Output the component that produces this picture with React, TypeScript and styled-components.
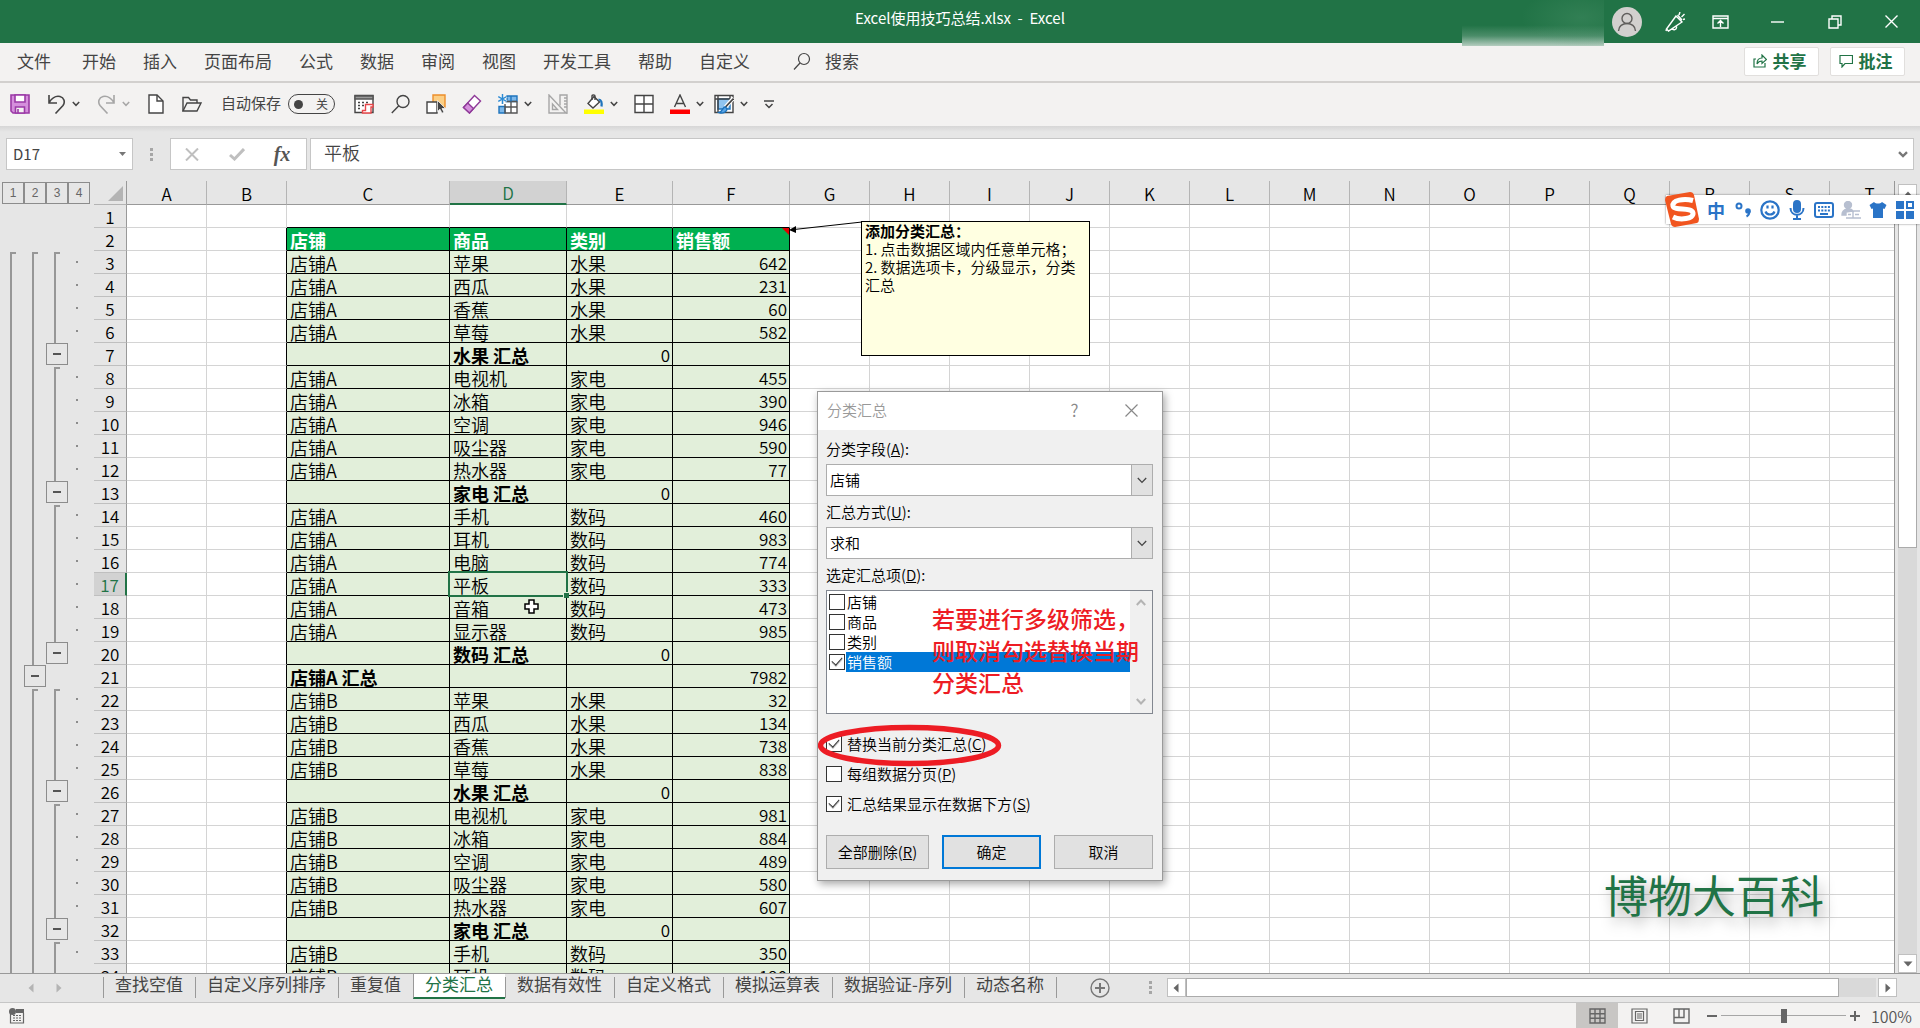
import React, { ReactNode } from "react";
import styled, { createGlobalStyle, css } from "styled-components";

const UI_FONT = `"Noto Sans CJK SC", "Noto Sans", sans-serif`;

const GlobalStyle = createGlobalStyle`
  *, *::before, *::after { box-sizing: border-box; }
  html, body { margin: 0; height: 100%; overflow: hidden; }
  body { font-family: ${UI_FONT}; font-weight: 350; color: #444; background: #e6e6e6; }
  button, input, select { font: inherit; color: inherit; margin: 0; }
  button { padding: 0; border: 0; background: none; }
  svg { display: block; }
`;

const Shell = styled.div`
  display: flex;
  flex-direction: column;
  height: 100vh;
  overflow: hidden;
`;

/* ---------- title bar ---------- */
const TitleBar = styled.header`
  position: relative;
  display: grid;
  grid-template-columns: 1fr auto 1fr;
  align-items: center;
  flex: 0 0 43px;
  background: #217346;
  color: #fff;
`;
const Title = styled.h1`
  grid-column: 2;
  margin: 0;
  font-size: 15px;
  font-weight: 400;
  line-height: 20px;
  padding-bottom: 7px;
  white-space: pre;
`;
const WindowTools = styled.div`
  display: flex;
  justify-content: flex-end;
  align-items: center;
`;
const WindowButton = styled.button<{ $w?: number }>`
  display: grid;
  place-items: center;
  width: ${(p) => p.$w ?? 57}px;
  height: 43px;
  color: #fff;
`;
const Avatar = styled.button`
  display: grid;
  place-items: center;
  width: 30px;
  height: 30px;
  margin-right: 16px;
  border-radius: 50%;
  background: #d2d0ce;
  color: #605e5c;
`;
const BlurredName = styled.div`
  position: absolute;
  z-index: 2;
  top: 0;
  right: 316px;
  width: 142px;
  height: 46px;
  background:
    radial-gradient(ellipse 60px 30px at 84% 38%, rgba(80, 150, 110, 0.35), transparent),
    linear-gradient(#217346 55%, #4b8d69 78%, #b4cdbf 100%);
`;

/* ---------- ribbon ---------- */
const MenuBar = styled.nav`
  display: flex;
  align-items: center;
  flex: 0 0 40px;
  padding: 0 15px 2px 17px;
  border-bottom: 2px solid #d2d0ce;
  background: #f3f2f1;
`;
const MenuList = styled.div`
  display: flex;
  gap: 27px;
`;
const MenuItem = styled.button`
  font-size: 17px;
  font-weight: 400;
  line-height: 24px;
  white-space: nowrap;
  &:first-child { margin-right: 4px; }
`;
const MenuSearch = styled.button`
  display: flex;
  align-items: center;
  gap: 14px;
  margin-left: 43px;
  font-size: 17px;
  font-weight: 400;
  line-height: 24px;
`;
const RibbonActions = styled.div`
  display: flex;
  gap: 11px;
  margin-left: auto;
`;
const ActionButton = styled.button`
  display: flex;
  align-items: center;
  justify-content: center;
  gap: 6px;
  width: 75px;
  height: 29px;
  padding: 0 4px 0 0;
  border: 1px solid #e1dfdd;
  border-radius: 2px;
  background: #fff;
  color: #217346;
  font-size: 17px;
  font-weight: 700;
  line-height: 24px;
`;

/* ---------- quick access ---------- */
const QuickBar = styled.div`
  display: flex;
  align-items: center;
  gap: 16px;
  flex: 0 0 43px;
  padding: 0 10px 1px;
  background: #f3f2f1;
`;
const ToolPair = styled.div`
  display: flex;
  gap: 10px;
`;
const ToolButton = styled.button<{ $dim?: boolean }>`
  display: flex;
  align-items: center;
  gap: 6px;
  color: ${(p) => (p.$dim ? "#a6a6a6" : "#444")};
`;
const AutoSave = styled.label`
  display: flex;
  align-items: center;
  gap: 7px;
  padding: 0 3px;
  font-size: 15px;
  font-weight: 400;
  line-height: 20px;
  & > span:first-child { padding-bottom: 3px; }
`;
const Toggle = styled.span`
  display: flex;
  align-items: center;
  justify-content: space-between;
  width: 47px;
  height: 20px;
  padding: 0 6px 0 5px;
  border: 1px solid #444;
  border-radius: 10px;
  font-size: 12px;
  line-height: 18px;
`;
const ToggleInput = styled.input`
  appearance: none;
  width: 9px;
  height: 9px;
  border-radius: 50%;
  background: #444;
`;

/* ---------- formula bar ---------- */
const FormulaBar = styled.div`
  display: flex;
  align-items: center;
  flex: 0 0 55px;
  padding: 12px 6px 11px;
  background: linear-gradient(#d6d6d6, #e6e6e6 6px);
`;
const Field = styled.div<{ $width?: number }>`
  display: flex;
  align-items: center;
  flex: ${(p) => (p.$width ? `0 0 ${p.$width}px` : "1")};
  min-width: 0;
  height: 32px;
  border: 1px solid #c6c6c6;
  background: #fff;
`;
const NameInput = styled.input`
  flex: 1;
  width: 0;
  min-width: 0;
  padding: 0 6px 1px;
  border: 0;
  outline: 0;
  background: none;
  font-size: 15px;
  font-weight: 400;
`;
const FormulaInput = styled(NameInput)`
  padding: 0 13px 4px;
  font-size: 18px;
  font-weight: 350;
  line-height: 24px;
`;
const FieldButton = styled.button`
  display: grid;
  place-items: center;
  flex: 0 0 20px;
  height: 30px;
`;
const FormulaActions = styled(Field)`
  justify-content: space-between;
  padding: 0 14px 0 11px;
  margin-right: 3px;
`;
const Fx = styled.span`
  font: italic 700 20px/24px "Liberation Serif", serif;
  color: #555;
`;
const Dots = styled.span<{ $margin: string }>`
  display: flex;
  flex-direction: column;
  gap: 2px;
  margin: ${(p) => p.$margin};
  &::before, &::after, & > i { content: ""; width: 3px; height: 3px; background: #a6a6a6; }
`;

/* ---------- sheet ---------- */
const Workspace = styled.main`
  position: relative;
  display: flex;
  flex: 1;
  min-height: 0;
  overflow: hidden;
  background: #e6e6e6;
`;
const Gutter = styled.aside`
  flex: 0 0 94px;
  padding: 1px 0 0 2px;
`;
const Levels = styled.div`
  display: flex;
  height: 23px;
`;
const LevelButton = styled.button`
  width: 22px;
  height: 22px;
  border: 1px solid #8c8c8c;
  font: 12px/20px "Liberation Sans", sans-serif;
  color: #666;
`;
const OutlineColumns = styled.div`
  display: flex;
  padding-top: 46px;
`;
const OutlineColumn = styled.div`
  display: flex;
  flex-direction: column;
  flex: 0 0 22px;
`;
const Bracket = styled.div<{ $rows: number }>`
  flex: 0 0 auto;
  height: ${(p) => p.$rows * 23}px;
  padding: 1px 0 0 8px;
  &::before {
    content: "";
    display: block;
    width: 6px;
    height: 100%;
    border: solid #979797;
    border-width: 2px 0 0 2px;
  }
`;
const CollapseButton = styled.button`
  display: grid;
  place-items: center;
  flex: 0 0 22px;
  margin-bottom: 1px;
  border: 1px solid #8c8c8c;
  &::before { content: ""; width: 8px; height: 2px; background: #555; }
`;
const Spacer = styled.div`
  flex: 0 0 23px;
`;
const DetailDot = styled.div<{ $on: boolean }>`
  flex: 0 0 23px;
  padding: 10px 0 0 8px;
  &::before { content: ""; display: block; width: 2px; height: 2px; background: ${(p) => (p.$on ? "#8c8c8c" : "transparent")}; }
`;
const GridArea = styled.div`
  flex: 1;
  min-width: 0;
  overflow: hidden;
  border-right: 1px solid #979797;
`;
const Grid = styled.table`
  width: 1815px;
  table-layout: fixed;
  border-collapse: separate;
  border-spacing: 0;
  color: #000;
`;
const ColHead = styled.th<{ $active?: boolean }>`
  height: 24px;
  padding: 2px 0 0;
  border-bottom: 1px solid #999;
  border-right: 1px solid #b4b4b4;
  background: #e6e6e6;
  font-size: 17px;
  font-weight: 350;
  line-height: 20px;
  ${(p) => p.$active && css`
    border-bottom: 2px solid #217346;
    background: #d2d2d2;
    color: #217346;
  `}
`;
const Corner = styled.td`
  height: 24px;
  padding: 0 3px 3px 0;
  border-right: 1px solid #999;
  border-bottom: 1px solid #b4b4b4;
  vertical-align: bottom;
  & svg { margin-left: auto; }
`;
const RowHead = styled.th<{ $active?: boolean }>`
  height: 23px;
  padding: 2px 0 0;
  border-right: 1px solid #999;
  border-bottom: 1px solid #bfbfbf;
  background: #e6e6e6;
  font-size: 17px;
  font-weight: 350;
  line-height: 20px;
  ${(p) => p.$active && css`
    border-right: 2px solid #217346;
    background: #d2d2d2;
    color: #217346;
  `}
`;
const Cell = styled.td<{ $kind?: "head" | "data"; $bold?: boolean; $num?: boolean; $edgeR?: boolean; $edgeB?: boolean }>`
  position: relative;
  height: 23px;
  padding: 2px 2px 0 3px;
  border: solid #d4d4d4;
  border-width: 0 1px 1px 0;
  background: #fff;
  font-size: ${(p) => (p.$num ? 17 : 18)}px;
  font-weight: ${(p) => (p.$bold ? 700 : 350)};
  line-height: 20px;
  text-align: ${(p) => (p.$num ? "right" : "left")};
  white-space: nowrap;
  ${(p) => p.$kind && css`
    border-color: #000;
    background: ${p.$kind === "head" ? "#00b050" : "#e2efda"};
  `}
  ${(p) => p.$kind === "head" && css`color: #fff;`}
  ${(p) => p.$edgeR && css`border-right-color: #000;`}
  ${(p) => p.$edgeB && css`border-bottom-color: #000;`}
`;
const CommentFlag = styled.span`
  position: absolute;
  top: 0;
  right: 0;
  width: 7px;
  height: 7px;
  background: #e00000;
  clip-path: polygon(0 0, 100% 0, 100% 100%);
`;
const Selection = styled.span`
  position: absolute;
  z-index: 1;
  inset: -2px;
  border: 2px solid #217346;
  &::after {
    content: "";
    position: absolute;
    right: -3px;
    bottom: -3px;
    width: 6px;
    height: 6px;
    border: solid #e2efda;
    border-width: 1px 0 0 1px;
    background: #217346;
  }
`;

/* ---------- scroll bars ---------- */
const VScroll = styled.div`
  display: flex;
  flex-direction: column;
  flex: 0 0 25px;
  padding: 3px 3px 0 3px;
`;
const VTrack = styled.div`
  flex: 1;
  background: #d9d9d9;
`;
const ScrollThumb = styled.div`
  border: 1px solid #ababab;
  background: #fff;
`;
const VThumb = styled(ScrollThumb)`
  height: 46%;
`;
const ScrollButton = styled.button`
  display: grid;
  place-items: center;
  flex: 0 0 19px;
  min-height: 19px;
  border: 1px solid #c0c0c0;
  background: #fff;
  color: #666;
`;

/* ---------- floating things over the sheet ---------- */
const NoteArrow = styled.svg`
  position: absolute;
  left: 788px;
  top: 38px;
`;
const Note = styled.div`
  position: absolute;
  left: 861px;
  top: 40px;
  width: 229px;
  height: 135px;
  padding: 0 3px;
  border: 1px solid #000;
  background: #ffffe1;
  color: #000;
  font-size: 15px;
  line-height: 18px;
  white-space: pre-line;
`;
const CellCursor = styled.svg`
  position: absolute;
  left: 523px;
  top: 417px;
`;
const Watermark = styled.div`
  position: absolute;
  right: 96px;
  bottom: 47px;
  color: #217346;
  font-size: 44px;
  font-weight: 400;
  line-height: 64px;
  text-shadow: 4px 8px 14px rgba(0, 0, 0, 0.35);
`;
const ImeBar = styled.div`
  position: absolute;
  z-index: 3;
  right: 0;
  top: 14px;
  display: flex;
  align-items: center;
  gap: 9px;
  width: 254px;
  height: 29px;
  padding-left: 41px;
  background: #fff;
  box-shadow: 0 0 2px rgba(0, 0, 0, 0.5);
  color: #2a74c7;
`;
const ImeLogo = styled.svg`
  position: absolute;
  left: -3px;
  top: -4px;
`;
const ImeButton = styled.button`
  display: flex;
  align-items: center;
  justify-content: center;
  flex: 0 0 18px;
  min-width: 0;
  height: 24px;
  color: inherit;
  font-size: 18px;
  font-weight: 700;
  line-height: 24px;
  & > svg { flex: none; }
`;

/* ---------- dialog ---------- */
const Dialog = styled.section`
  position: absolute;
  z-index: 2;
  left: 817px;
  top: 210px;
  width: 346px;
  border: 1px solid #9a9a9a;
  background: #f0f0f0;
  box-shadow: 2px 3px 8px rgba(0, 0, 0, 0.35);
  color: #000;
  font-size: 15px;
  line-height: 20px;
`;
const DialogTitle = styled.header`
  display: flex;
  align-items: center;
  height: 38px;
  padding: 0 24px 2px 9px;
  background: #fff;
  color: #999;
`;
const DialogHeading = styled.h2`
  flex: 1;
  margin: 0;
  font-size: 15px;
  font-weight: 350;
`;
const DialogTool = styled.button`
  display: grid;
  place-items: center;
  width: 13px;
  height: 24px;
  margin-left: 44px;
  color: #888;
  font-size: 17px;
`;
const DialogBody = styled.div`
  padding: 9px 9px 11px 8px;
`;
const FieldLabel = styled.label`
  display: block;
  height: 25px;
`;
const SelectBox = styled.div`
  position: relative;
  height: 32px;
  margin-bottom: 6px;
`;
const Select = styled.select`
  appearance: none;
  width: 100%;
  height: 32px;
  padding: 0 26px 0 3px;
  border: 1px solid #adadad;
  border-radius: 0;
  background: #fff;
`;
const SelectArrow = styled.span`
  position: absolute;
  top: 0;
  right: 0;
  display: grid;
  place-items: center;
  width: 22px;
  height: 32px;
  border: 1px solid #adadad;
  background: #e1e1e1;
  color: #444;
  pointer-events: none;
`;
const ListBox = styled.div`
  display: flex;
  height: 124px;
  border: 1px solid #828790;
  background: #fff;
`;
const ListItems = styled.div`
  flex: 1;
  padding: 1px 0 0 2px;
`;
const ListItem = styled.label<{ $selected?: boolean }>`
  display: flex;
  align-items: center;
  gap: 1px;
  height: 20px;
  & > span {
    flex: 1;
    padding-left: 1px;
    ${(p) => p.$selected && css`background: #0078d7; color: #fff;`}
  }
`;
const ListScroll = styled.div`
  display: flex;
  flex-direction: column;
  justify-content: space-between;
  align-items: center;
  width: 22px;
  padding: 8px 0;
  background: #f0f0f0;
  color: #b4b4b4;
`;
const Checkbox = styled.input`
  appearance: none;
  flex: 0 0 16px;
  width: 16px;
  height: 16px;
  border: 1px solid #333;
  background: #fff;
  &:checked::after {
    content: "";
    display: block;
    width: 10px;
    height: 6px;
    margin: 2px 0 0 2px;
    border: solid #333;
    border-width: 0 0 1px 1px;
    box-shadow: -1px 1px 0 rgba(51, 51, 51, 0.25);
    transform: rotate(-48deg);
  }
`;
const Options = styled.div`
  display: flex;
  flex-direction: column;
  gap: 10px;
  padding: 20px 0 21px;
`;
const Option = styled.label`
  display: flex;
  align-items: center;
  gap: 5px;
`;
const DialogButtons = styled.div`
  display: grid;
  grid-template-columns: 103px 99px 99px;
  justify-content: space-between;
`;
const DialogButton = styled.button<{ $primary?: boolean }>`
  height: 34px;
  border: ${(p) => (p.$primary ? "2px solid #0078d7" : "1px solid #adadad")};
  background: #e1e1e1;
`;
const Callout = styled.p`
  position: absolute;
  left: 114px;
  top: 210px;
  margin: 0;
  color: #ed1c24;
  font-size: 23px;
  font-weight: 500;
  line-height: 32px;
  white-space: pre;
`;
const Ring = styled.svg`
  position: absolute;
  left: 0;
  top: 332px;
`;

/* ---------- tabs + status ---------- */
const TabBar = styled.div`
  display: flex;
  align-items: flex-start;
  flex: 0 0 30px;
  border-top: 1px solid #999;
  border-bottom: 1px solid #c6c6c6;
  background: #e6e6e6;
`;
const TabNav = styled.div`
  display: flex;
  align-items: center;
  gap: 18px;
  flex: 0 0 103px;
  height: 28px;
  padding-left: 26px;
  color: #b4b4b4;
`;
const Tab = styled.button<{ $active?: boolean }>`
  flex: 0 0 auto;
  height: 21px;
  margin-top: 3px;
  padding: 0 12px 8px 11px;
  border-left: 1px solid #999;
  font-size: 17px;
  font-weight: 400;
  line-height: 13px;
  white-space: nowrap;
  &:last-of-type { border-right: 1px solid #999; }
  ${(p) => p.$active && css`
    height: 25px;
    margin-top: 0;
    padding-bottom: 4px;
    border-bottom: 2px solid #217346;
    background: #fff;
    color: #217346;
  `}
`;
const Tabs = styled.div`
  display: flex;
`;
const AddSheet = styled.button`
  margin: 4px 0 0 33px;
  color: #777;
`;
const HScroll = styled.div`
  display: flex;
  flex: 1;
  height: 19px;
  margin: 4px 23px 0 0;
`;
const HTrack = styled.div`
  display: flex;
  flex: 1;
  margin-right: 2px;
  padding-right: 37px;
  background: #d9d9d9;
`;
const HThumb = styled(ScrollThumb)`
  flex: 1;
`;
const StatusBar = styled.footer`
  display: flex;
  align-items: center;
  flex: 0 0 25px;
  padding: 0 8px 0 9px;
  background: #f3f2f1;
  color: #666;
`;
const ViewButtons = styled.div`
  display: flex;
  margin-left: auto;
`;
const ViewButton = styled.button<{ $on?: boolean }>`
  display: grid;
  place-items: center;
  width: 42px;
  height: 25px;
  background: ${(p) => (p.$on ? "#c8c6c4" : "transparent")};
`;
const ZoomControl = styled.div`
  display: flex;
  align-items: center;
  gap: 4px;
  margin-left: 5px;
`;
const ZoomSlider = styled.input`
  appearance: none;
  width: 125px;
  height: 15px;
  background: linear-gradient(#a6a6a6, #a6a6a6) center / 100% 1px no-repeat;
  &::-webkit-slider-thumb {
    appearance: none;
    width: 6px;
    height: 14px;
    background: #666;
  }
`;
const ZoomValue = styled.span`
  margin-left: 7px;
  font-size: 16px;
  line-height: 20px;
  color: #555;
`;

/* ---------- icons ---------- */
const Icon = ({ children, w = 20, h = 20, sw = 1.4 }: { children: ReactNode; w?: number; h?: number; sw?: number }) => (
  <svg width={w} height={h} viewBox={`0 0 ${w} ${h}`} fill="none" stroke="currentColor" strokeWidth={sw} aria-hidden="true">
    {children}
  </svg>
);
const Caret = () => (
  <Icon w={8} h={6} sw={1.5}><path d="M.8 1 4 4.3 7.2 1" /></Icon>
);
const Chevron = () => (
  <Icon w={10} h={7} sw={1.3}><path d="M.8 1 5 5.4 9.2 1" /></Icon>
);
const Tri = ({ d }: { d: "up" | "down" | "left" | "right" }) => {
  const paths = { up: "M5 2.5 9.5 7.5H.5z", down: "M.5 2.5h9L5 7.5z", left: "M7.5.5v9L2.5 5z", right: "M2.5.5v9L7.5 5z" };
  return <svg width="10" height="10" aria-hidden="true"><path d={paths[d]} fill="currentColor" /></svg>;
};
const SearchIcon = () => (
  <Icon><circle cx="13" cy="7.5" r="6" /><path d="M8.800 11.800 1.800 19" /></Icon>
);
const SaveIcon = () => (
  <Icon sw={1.6}>
    <path d="M1 1h18v18H3l-2-2z" fill="#d58fdc" stroke="#9b3aa6" />
    <path d="M5 1h10v7H5z" fill="#fff" stroke="#9b3aa6" />
    <path d="M5.5 19v-6h9v6z" fill="#f3f2f1" stroke="#9b3aa6" />
    <path d="M8 15v4" stroke="#9b3aa6" />
  </Icon>
);
const UndoIcon = () => <Icon sw={1.6}><path d="M3 1v8h8M3 8.5C6 4 10 1.5 14 2.5c4 1 5.5 5.5 3 9L9.5 19.5" /></Icon>;
const RedoIcon = () => <Icon sw={1.6}><path d="M18 1v8h-8M18 8.5C15 4 11 1.5 7 2.5c-4 1-5.5 5.5-3 9L11.5 19.5" /></Icon>;
const NewIcon = () => <Icon><path d="M3 1h8l6 6v12H3z" fill="#fff" /><path d="M11 1v6h6" /></Icon>;
const OpenIcon = () => <Icon><path d="M1 17V3.5h5.5l2 2.5H15v3" /><path d="M1 17 5 9h14l-4 8z" /></Icon>;
const CalendarIcon = () => (
  <Icon>
    <path d="M1 1.500h18v17H1z" fill="#fff" /><path d="M1 2h18v3H1z" fill="#999" stroke="#555" />
    <path d="M4 8.500h2m2 0h2m2 0h2M4 11.500h2m2 0h2M4 14.500h2" />
    <path d="M8.500 19v-2.500h3v-6H19V13h-2v6z" fill="#fff" stroke="#e8474a" strokeWidth="1.400" />
  </Icon>
);
const SelectIcon = () => (
  <Icon>
    <path d="M7 1h12v12H7z" fill="#fbcf85" stroke="#ed8f2b" /><path d="M1 8h10v11H1z" fill="#fff" />
    <path d="M11.500 6.500v11l2.500-2.300 2 4 2-1-2-3.700h3.500z" fill="#444" stroke="#fff" strokeWidth=".7" />
  </Icon>
);
const EraserIcon = () => (
  <Icon><path d="M12.500 1.500 18.500 7 7.500 19 1.500 13.500z" fill="#fff" stroke="#8f3a99" /><path d="M5.800 9 11.500 14.500 7.500 19l-6-5.500z" fill="#d58fdc" stroke="#8f3a99" /></Icon>
);
const TableIcon = () => (
  <Icon>
    <path d="M1 2h18v17H1z" fill="#fff" stroke="none" />
    <path d="M9 2h10v5.500H9zM1 12.500h6V19H1z" fill="#7db8ea" stroke="#1e74bd" />
    <path d="M7 13h12M7 7.500h12M13 7.500v11.500M7 10v9h12V7.500" stroke="#555" />
    <path d="M13 2v5.500" stroke="#1e74bd" />
    <path d="M4.500 0v10M.3 2.500l8.400 5M8.700 2.500.3 7.500" stroke="#f3f2f1" strokeWidth="3" />
    <path d="M4.500 0v10M.3 2.500l8.400 5M8.700 2.500.3 7.500" stroke="#2a8ad4" />
  </Icon>
);
const RulerIcon = () => (
  <Icon><path d="M1 1v18h17zM4.500 10v5.500h5z" /><path d="M12 11.500V1h7v18h-1M16 4h3M16 7h3M16 10h3M16 13h3" /></Icon>
);
const FillIcon = () => (
  <Icon>
    <path d="M10 2.500 15.500 8 9 14 4 9.500z" fill="#fff" /><path d="M8 6V2c0-1.500 3-1.500 3 0v4" /><path d="M14.500 5.500c3 0 3.500 3 3 7" stroke="#1e74bd" strokeWidth="2.200" />
    <path d="M0 15.500h20v4.500H0z" fill="#ff0" stroke="none" />
  </Icon>
);
const BordersIcon = () => <Icon><path d="M1 1.500h18v17H1z" fill="#fff" /><path d="M10 1.500v17M1 10h18" /></Icon>;
const FontColorIcon = () => (
  <Icon><path d="M4.500 13 10 1l5.500 12M6.500 9.500h7" /><path d="M0 15.500h20v4.500H0z" fill="red" stroke="none" /></Icon>
);
const FormatIcon = () => (
  <Icon>
    <path d="M1 1.500h18v17H1z" fill="#fff" /><path d="M4 5h12v10H4z" fill="#8fc4f0" stroke="#1e74bd" />
    <path d="M1 5h18M4 1.500v17M16 1.500v4" /><path d="m19.500 4-8 9" stroke="#fff" strokeWidth="4" /><path d="m19.500 4.500-8 8.500" stroke="#444" strokeWidth="1.800" />
    <path d="M11.500 13c-3-.5-2 4-6.500 5.500 4 1.500 8-.5 8-3.500z" fill="#5aa5e6" stroke="#1e74bd" />
  </Icon>
);

/* ---------- data ---------- */
type Row = [string, string, string, string];
const goods: [string, string][] = [
  ["苹果", "水果"], ["西瓜", "水果"], ["香蕉", "水果"], ["草莓", "水果"], ["水果 汇总", ""],
  ["电视机", "家电"], ["冰箱", "家电"], ["空调", "家电"], ["吸尘器", "家电"], ["热水器", "家电"], ["家电 汇总", ""],
  ["手机", "数码"], ["耳机", "数码"], ["电脑", "数码"], ["平板", "数码"], ["音箱", "数码"], ["显示器", "数码"], ["数码 汇总", ""],
];
const salesA = [642, 231, 60, 582, 0, 455, 390, 946, 590, 77, 0, 460, 983, 774, 333, 473, 985, 0];
const salesB = [32, 134, 738, 838, 0, 981, 884, 489, 580, 607, 0, 350, 190];
const shopRows = (shop: string, sales: number[]): Row[] =>
  sales.map((n, i) => (goods[i][1] ? [shop, goods[i][0], goods[i][1], String(n)] : ["", goods[i][0], "0", ""]));
const rows: Row[] = [
  ["店铺", "商品", "类别", "销售额"],
  ...shopRows("店铺A", salesA),
  ["店铺A 汇总", "", "", "7982"],
  ...shopRows("店铺B", salesB),
];
const widths = [80, 80, 163, 117, 106, 117, ...Array(14).fill(80)];
const letters = "ABCDEFGHIJKLMNOPQRST".split("");
const menus = ["文件", "开始", "插入", "页面布局", "公式", "数据", "审阅", "视图", "开发工具", "帮助", "自定义"];
const tabs = ["查找空值", "自定义序列排序", "重复值", "分类汇总", "数据有效性", "自定义格式", "模拟运算表", "数据验证-序列", "动态名称"];
const level3 = [4, 5, 6, 0, 4, 5];

const SheetRow = ({ index }: { index: number }) => {
  const data = rows[index - 2];
  return (
    <tr>
      <RowHead scope="row" $active={index === 17}>{index}</RowHead>
      {letters.map((letter, c) => {
        const value = data && c >= 2 && c <= 5 ? data[c - 2] : undefined;
        if (value === undefined)
          return <Cell key={letter} $edgeR={!!data && c === 1} $edgeB={index === 1 && c >= 2 && c <= 5} />;
        const head = index === 2;
        return (
          <Cell key={letter} $kind={head ? "head" : "data"} $bold={head || value.includes("汇总")} $num={/^\d+$/.test(value)}>
            {value}
            {head && c === 5 && <CommentFlag />}
            {index === 17 && c === 3 && <Selection />}
          </Cell>
        );
      })}
    </tr>
  );
};

const Outline = () => (
  <Gutter aria-label="分级显示">
    <Levels>{[1, 2, 3, 4].map((n) => <LevelButton key={n}>{n}</LevelButton>)}</Levels>
    <OutlineColumns>
      <OutlineColumn><Bracket $rows={40} /></OutlineColumn>
      <OutlineColumn><Bracket $rows={18} /><CollapseButton aria-label="折叠" /><Bracket $rows={20} /></OutlineColumn>
      <OutlineColumn>
        {level3.map((n, i) => n === 0 ? <Spacer key={i} /> : (
          <React.Fragment key={i}><Bracket $rows={n} /><CollapseButton aria-label="折叠" /></React.Fragment>
        ))}
        <Bracket $rows={8} />
      </OutlineColumn>
      <OutlineColumn>{rows.slice(1, 32).map((r, i) => <DetailDot key={i} $on={r[0] !== "" && r[1] !== ""} />)}</OutlineColumn>
    </OutlineColumns>
  </Gutter>
);

const SubtotalDialog = () => (
  <Dialog role="dialog" aria-labelledby="dlg">
    <DialogTitle>
      <DialogHeading id="dlg">分类汇总</DialogHeading>
      <DialogTool>?</DialogTool>
      <DialogTool aria-label="关闭"><Icon w={13} h={13} sw={1.2}><path d="m.5.5 12 12m0-12-12 12" /></Icon></DialogTool>
    </DialogTitle>
    <DialogBody>
      <FieldLabel htmlFor="field">分类字段(<u>A</u>):</FieldLabel>
      <SelectBox><Select id="field"><option>店铺</option></Select><SelectArrow><Chevron /></SelectArrow></SelectBox>
      <FieldLabel htmlFor="method">汇总方式(<u>U</u>):</FieldLabel>
      <SelectBox><Select id="method"><option>求和</option></Select><SelectArrow><Chevron /></SelectArrow></SelectBox>
      <FieldLabel as="div" id="items">选定汇总项(<u>D</u>):</FieldLabel>
      <ListBox role="group" aria-labelledby="items">
        <ListItems>
          {["店铺", "商品", "类别", "销售额"].map((name, i) => (
            <ListItem key={name} $selected={i === 3}><Checkbox type="checkbox" defaultChecked={i === 3} /><span>{name}</span></ListItem>
          ))}
        </ListItems>
        <ListScroll>
          <Icon w={10} h={7} sw={2}><path d="M.8 6 5 1.5 9.2 6" /></Icon>
          <Icon w={10} h={7} sw={2}><path d="M.8 1 5 5.5 9.2 1" /></Icon>
        </ListScroll>
      </ListBox>
      <Options>
        <Option><Checkbox type="checkbox" defaultChecked /><span>替换当前分类汇总(<u>C</u>)</span></Option>
        <Option><Checkbox type="checkbox" /><span>每组数据分页(<u>P</u>)</span></Option>
        <Option><Checkbox type="checkbox" defaultChecked /><span>汇总结果显示在数据下方(<u>S</u>)</span></Option>
      </Options>
      <DialogButtons>
        <DialogButton>全部删除(<u>R</u>)</DialogButton>
        <DialogButton $primary>确定</DialogButton>
        <DialogButton>取消</DialogButton>
      </DialogButtons>
    </DialogBody>
    <Callout>{"若要进行多级筛选，\n则取消勾选替换当期\n分类汇总"}</Callout>
    <Ring width="186" height="44" aria-hidden="true"><ellipse cx="91.500" cy="21.500" rx="89" ry="18" fill="none" stroke="#ed1c24" strokeWidth="5.500" /></Ring>
  </Dialog>
);

const Ime = () => (
  <ImeBar>
    <ImeLogo width="38" height="38" viewBox="0 0 38 38" aria-hidden="true">
      <path d="M4 5 27 1q3 0 4 3l5 24q0 3-2 4L12 36q-3 0-4-3L2 9q0-3 2-4z" fill="#f1551f" />
      <path d="M30 9.500C21 7 9 9 10 15c1 5 19 1 20 7 1 6-13 7.500-20 4" fill="none" stroke="#fff" strokeWidth="5" />
    </ImeLogo>
    <ImeButton>中</ImeButton>
    <ImeButton aria-label="标点"><Icon w={18} h={18} sw={2}><circle cx="5" cy="5" r="2.500" /><circle cx="14" cy="10" r="2.800" fill="currentColor" stroke="none" /><path d="M15.500 10c0 3-1 4.500-3 5.500" /></Icon></ImeButton>
    <ImeButton aria-label="表情"><Icon w={20} h={20} sw={2.2}><circle cx="10" cy="10" r="8.700" /><path d="M5.500 11.500c1.500 4 7.500 4 9 0M7.500 5.500v3M12.500 5.500v3" /></Icon></ImeButton>
    <ImeButton aria-label="语音"><Icon w={16} h={20} sw={2}><rect x="5" y="1" width="6" height="11" rx="3" fill="currentColor" /><path d="M1.500 8c0 9 13 9 13 0M8 15v4M4 19h8" /></Icon></ImeButton>
    <ImeButton aria-label="键盘"><Icon w={20} h={16} sw={2}><rect x="1" y="1" width="18" height="14" rx="2" /><path d="M4 5h12M4 8.500h12" strokeDasharray="2 1.300" /><path d="M6 12h8" /></Icon></ImeButton>
    <ImeButton aria-label="词库"><Icon w={20} h={18}><g stroke="#b7bfd0"><circle cx="7" cy="4" r="3.500" fill="#b7bfd0" /><path d="M1 14c0-7 9-7 11-4l-7 1v3z" fill="#b7bfd0" /><path d="M5 10h6l1 1 1-1h6M5 17h15M12 11v6M7 13.500h3M14 13.500h4" fill="none" /></g></Icon></ImeButton>
    <ImeButton aria-label="皮肤"><Icon w={18} h={18}><path d="M5 1c2 2 6 2 8 0l4.500 3-2 4-1.500-.5V17H4V7.500L2.500 8l-2-4z" fill="currentColor" stroke="none" /></Icon></ImeButton>
    <ImeButton aria-label="工具"><Icon w={18} h={18} sw={2}><path d="M1 1h6v6H1zM1 11h6v6H1zM11 11h6v6h-6z" fill="currentColor" /><path d="M11 1h6v6h-6z" /></Icon></ImeButton>
  </ImeBar>
);

export default function App() {
  return (
    <Shell>
      <GlobalStyle />
      <TitleBar>
        <Title>{"Excel使用技巧总结.xlsx  -  Excel"}</Title>
        <WindowTools>
          <Avatar aria-label="账户"><Icon w={20} h={20}><circle cx="10" cy="6.5" r="5" /><path d="M1.5 19c0-10 17-10 17 0" /></Icon></Avatar>
          <WindowButton $w={34} aria-label="墨迹">
            <Icon w={20} h={20}><path d="M11 4 1.500 17l2 2L17 10zM1.500 17l-.5 2M7 16c1 3 5 2 4.500-1.500M12.500 3l4.500 5M14 3l1-3M16.500 5l3-3M18 7.500l2-.5" /></Icon>
          </WindowButton>
          <WindowButton aria-label="功能区选项"><Icon w={17} h={14}><path d="M1 1h15v12H1zM1 3.500h15M8.500 12V6M5.500 8.500l3-3 3 3" /></Icon></WindowButton>
          <WindowButton aria-label="最小化"><Icon w={13} h={2}><path d="M0 1h13" /></Icon></WindowButton>
          <WindowButton aria-label="还原"><Icon w={14} h={14}><path d="M1 4h9v9H1zM4 4V1h9v9h-3" /></Icon></WindowButton>
          <WindowButton aria-label="关闭窗口"><Icon w={13} h={13}><path d="m.5.5 12 12m0-12-12 12" /></Icon></WindowButton>
        </WindowTools>
        <BlurredName />
      </TitleBar>

      <MenuBar>
        <MenuList>{menus.map((m) => <MenuItem key={m}>{m}</MenuItem>)}</MenuList>
        <MenuSearch><Icon w={18} h={18} sw={1.2}><circle cx="11" cy="7" r="5.5" /><path d="M7 11 1 17.5" /></Icon>搜索</MenuSearch>
        <RibbonActions>
          <ActionButton><Icon w={14} h={14} sw={1.2}><path d="M3 5H1v8h11V9" /><path d="M4 10c0-4 2-6 5-6V1l4.5 4.5L9 9.5V7C7 7 5 8 4 10z" /></Icon>共享</ActionButton>
          <ActionButton><Icon w={14} h={14} sw={1.2}><path d="M1 1.5h12.5v8H6L3 13V9.500H1z" /></Icon>批注</ActionButton>
        </RibbonActions>
      </MenuBar>

      <QuickBar>
        <ToolButton aria-label="保存"><SaveIcon /></ToolButton>
        <ToolButton aria-label="撤消"><UndoIcon /><Caret /></ToolButton>
        <ToolButton aria-label="恢复" $dim><RedoIcon /><Caret /></ToolButton>
        <ToolButton aria-label="新建"><NewIcon /></ToolButton>
        <ToolButton aria-label="打开"><OpenIcon /></ToolButton>
        <AutoSave><span>自动保存</span><Toggle><ToggleInput type="checkbox" role="switch" />关</Toggle></AutoSave>
        <ToolButton aria-label="日历"><CalendarIcon /></ToolButton>
        <ToolButton aria-label="查找"><SearchIcon /></ToolButton>
        <ToolButton aria-label="选择对象"><SelectIcon /></ToolButton>
        <ToolButton aria-label="清除"><EraserIcon /></ToolButton>
        <ToolButton aria-label="冻结窗格"><TableIcon /><Caret /></ToolButton>
        <ToolButton aria-label="标尺" $dim><RulerIcon /></ToolButton>
        <ToolButton aria-label="填充颜色"><FillIcon /><Caret /></ToolButton>
        <ToolButton aria-label="边框"><BordersIcon /></ToolButton>
        <ToolPair>
          <ToolButton aria-label="字体颜色"><FontColorIcon /><Caret /></ToolButton>
          <ToolButton aria-label="套用格式"><FormatIcon /><Caret /></ToolButton>
        </ToolPair>
        <ToolButton aria-label="自定义工具栏"><Icon w={10} h={9} sw={1.5}><path d="M0 1h10M1.5 4 5 7.5 8.5 4" /></Icon></ToolButton>
      </QuickBar>

      <FormulaBar>
        <Field $width={127}>
          <NameInput aria-label="名称框" defaultValue="D17" />
          <FieldButton aria-label="名称列表"><svg width="7" height="4" aria-hidden="true"><path d="M0 0h7L3.5 4z" fill="#777" /></svg></FieldButton>
        </Field>
        <Dots $margin="0 17px"><i /></Dots>
        <FormulaActions $width={137}>
          <FieldButton aria-label="取消输入"><Icon w={14} h={13} sw={2}><path d="m1 .5 12 12m0-12-12 12" stroke="#bfbfbf" /></Icon></FieldButton>
          <FieldButton aria-label="输入"><Icon w={16} h={13} sw={3}><path d="m1 7 4.500 4L15 1" stroke="#bfbfbf" /></Icon></FieldButton>
          <FieldButton aria-label="插入函数"><Fx>fx</Fx></FieldButton>
        </FormulaActions>
        <Field>
          <FormulaInput aria-label="编辑栏" defaultValue="平板" />
          <FieldButton aria-label="展开编辑栏"><Icon w={10} h={7} sw={2.4}><path d="M1 1.2 5 5l4-3.8" stroke="#777" /></Icon></FieldButton>
        </Field>
      </FormulaBar>

      <Workspace>
        <Outline />
        <GridArea>
          <Grid>
            <colgroup><col style={{ width: 33 }} />{widths.map((w, i) => <col key={i} style={{ width: w }} />)}</colgroup>
            <thead>
              <tr>
                <Corner><svg width="15" height="15" aria-hidden="true"><path d="M15 0v15H0z" fill="#b4b4b4" /></svg></Corner>
                {letters.map((l) => <ColHead key={l} scope="col" $active={l === "D"}>{l}</ColHead>)}
              </tr>
            </thead>
            <tbody>{Array.from({ length: 34 }, (_, i) => <SheetRow key={i} index={i + 1} />)}</tbody>
          </Grid>
        </GridArea>
        <VScroll>
          <ScrollButton aria-label="向上"><Tri d="up" /></ScrollButton>
          <VTrack><VThumb /></VTrack>
          <ScrollButton aria-label="向下"><Tri d="down" /></ScrollButton>
        </VScroll>

        <NoteArrow width="76" height="20" aria-hidden="true"><path d="M74 3 6 10.5" stroke="#000" /><path d="M1 11 8 7v7z" /></NoteArrow>
        <Note><b>添加分类汇总：</b>{"\n1. 点击数据区域内任意单元格；\n2. 数据选项卡，分级显示，分类\n汇总"}</Note>
        <CellCursor width="17" height="17" aria-hidden="true"><path d="M6 2h5v4h4v5h-4v4H6v-4H2V6h4z" fill="#fff" stroke="#000" strokeWidth="1.5" /></CellCursor>
        <Watermark>博物大百科</Watermark>
        <Ime />
        <SubtotalDialog />
      </Workspace>

      <TabBar>
        <TabNav><Tri d="left" /><Tri d="right" /></TabNav>
        <Tabs>{tabs.map((t) => <Tab key={t} $active={t === "分类汇总"}>{t}</Tab>)}</Tabs>
        <AddSheet aria-label="新工作表"><Icon w={20} h={20}><circle cx="10" cy="10" r="9" /><path d="M10 5v10M5 10h10" strokeWidth="2" /></Icon></AddSheet>
        <Dots $margin="7px 15px 0 39px"><i /></Dots>
        <HScroll>
          <ScrollButton aria-label="向左"><Tri d="left" /></ScrollButton>
          <HTrack><HThumb /></HTrack>
          <ScrollButton aria-label="向右"><Tri d="right" /></ScrollButton>
        </HScroll>
      </TabBar>

      <StatusBar>
        <Icon w={16} h={16} sw={1.2}><path d="M1.5 5v10h13V5" /><path d="M7 1h8v4H7z" fill="currentColor" stroke="none" /><circle cx="3.5" cy="3.5" r="3.5" fill="currentColor" stroke="none" /><path d="M4 7.5h9M4 10h9M4 12.5h9" strokeDasharray="2 1" /></Icon>
        <ViewButtons>
          <ViewButton $on aria-label="普通"><Icon w={17} h={16}><path d="M1 1h15v14H1zM1 5.7h15M1 10.3h15M6 1v14M11 1v14" /></Icon></ViewButton>
          <ViewButton aria-label="页面布局视图"><Icon w={17} h={16} sw={1.2}><path d="M1 1h15v14H1zM4.5 3.5h8v9h-8zM6 6h5M6 8h5M6 10h5" /></Icon></ViewButton>
          <ViewButton aria-label="分页预览"><Icon w={17} h={16}><path d="M1 1h15v14H1zM1 9.5h10V1M6 1v8" /></Icon></ViewButton>
        </ViewButtons>
        <ZoomControl>
          <button aria-label="缩小"><Icon w={10} h={10} sw={2}><path d="M0 5h10" /></Icon></button>
          <ZoomSlider type="range" aria-label="缩放" min={0} max={100} defaultValue={50} />
          <button aria-label="放大"><Icon w={10} h={10} sw={2}><path d="M0 5h10M5 0v10" /></Icon></button>
          <ZoomValue>100%</ZoomValue>
        </ZoomControl>
      </StatusBar>
    </Shell>
  );
}
